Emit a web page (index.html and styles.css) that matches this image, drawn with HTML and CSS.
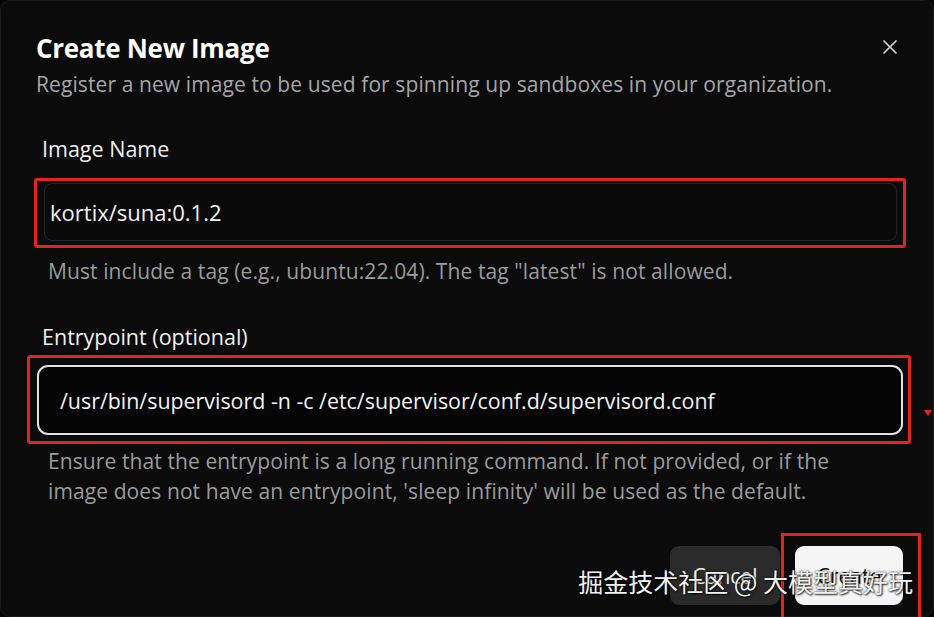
FILE: index.html
```html
<!DOCTYPE html>
<html lang="en">
<head>
<meta charset="utf-8">
<title>Create New Image</title>
<link rel="stylesheet" href="styles.css">
</head>
<body>
<div class="dialog">
  <button class="close" aria-label="Close">
    <svg width="16" height="16" viewBox="0 0 16 16"><path d="M2 2L14 14M14 2L2 14" stroke="#d4d4d4" stroke-width="1.7" stroke-linecap="round"/></svg>
  </button>
  <h1 class="title">Create New Image</h1>
  <p class="subtitle">Register a new image to be used for spinning up sandboxes in your organization.</p>

  <label class="label label-first">Image Name</label>
  <div class="mark mark-one">
    <div class="input input-plain">kortix/suna:0.1.2</div>
  </div>
  <p class="help help-one">Must include a tag (e.g., ubuntu:22.04). The tag "latest" is not allowed.</p>

  <label class="label label-second">Entrypoint (optional)</label>
  <div class="mark mark-two">
    <div class="input input-focus">/usr/bin/supervisord -n -c /etc/supervisor/conf.d/supervisord.conf</div>
    <span class="tick"></span>
  </div>
  <p class="help help-two">Ensure that the entrypoint is a long running command. If not provided, or if the image does not have an entrypoint, 'sleep infinity' will be used as the default.</p>

  <div class="actions">
    <button class="btn btn-cancel">Cancel</button>
    <span class="create-wrap"><button class="btn btn-create">Create</button></span>
  </div>

  <div class="watermark">掘金技术社区 @ 大模型真好玩</div>
</div>
</body>
</html>
```
FILE: styles.css
```css
* { box-sizing: border-box; }
html, body { margin: 0; padding: 0; background: #050505; }
body {
  width: 934px;
  height: 617px;
  overflow: hidden;
  font-family: "Open Sans", "Noto Sans", sans-serif;
}
.dialog {
  position: relative;
  width: 934px;
  height: 617px;
  background: #0b0b0b;
  border: 1px solid #1a1a1a;
  border-radius: 10px;
  padding: 31px 30px 0 35px;
  display: flex;
  flex-direction: column;
  align-items: flex-start;
}
.close {
  position: absolute;
  top: 38px;
  right: 35px;
  background: none;
  border: 0;
  padding: 0;
  width: 16px;
  height: 16px;
  display: flex;
  align-items: center;
  justify-content: center;
}
.title {
  margin: 0;
  font-size: 26px;
  line-height: 32px;
  font-weight: 700;
  color: #ffffff;
  letter-spacing: -0.3px;
}
.subtitle {
  margin: 6px 0 0;
  font-size: 21px;
  line-height: 28px;
  color: #a6a6a6;
  letter-spacing: 0.1px;
}
.label {
  display: block;
  margin-left: 6px;
  font-size: 21.5px;
  line-height: 28px;
  color: #f0f0f0;
}
.label-first { margin-top: 37px; }
.label-second { margin-top: 38px; }
.mark {
  position: relative;
  border: 3px solid #e0261c;
  border-radius: 3px;
}
.mark-one {
  margin-top: 15px;
  margin-left: -2px;
  width: 872px;
  padding: 2px 6px 4px 7px;
}
.mark-two {
  margin-top: 4px;
  margin-left: -9px;
  width: 884px;
  padding: 7px 5px 6px 7px;
}
.input {
  width: 100%;
  display: flex;
  align-items: center;
  font-size: 22px;
  color: #f2f2f2;
  background: #0a0a0a;
}
.input-plain {
  height: 58px;
  border: 1px solid #262626;
  border-radius: 8px;
  padding-left: 5px;
}
.input-focus {
  height: 70px;
  font-size: 21.4px;
  border: 2px solid #e2e2e2;
  border-radius: 11px;
  padding-left: 21px;
  background: #050505;
}
.tick {
  position: absolute;
  right: -24px;
  top: 52px;
  width: 0;
  height: 0;
  border-left: 4px solid transparent;
  border-right: 4px solid transparent;
  border-top: 6px solid #e0261c;
}
.help {
  margin: 0;
  margin-left: 12px;
  font-size: 21px;
  color: #9b9b9b;
  letter-spacing: 0.1px;
}
.help-one { margin-top: 9px; line-height: 28px; }
.help-two { margin-top: 2px; line-height: 30px; width: 792px; }
.actions {
  align-self: flex-end;
  margin-top: 40px;
  display: flex;
  gap: 15px;
}
.btn {
  height: 59px;
  border: 0;
  border-radius: 9px;
  font-family: inherit;
  font-size: 21px;
  padding: 0;
}
.btn-cancel {
  width: 110px;
  background: #2a2a2a;
  color: #ececec;
}
.create-wrap {
  position: relative;
  display: block;
}
.create-wrap::after {
  content: "";
  position: absolute;
  left: -14px;
  top: -13px;
  right: -18px;
  bottom: -30px;
  border: 3px solid #e0261c;
}
.btn-create {
  width: 108px;
  background: #f5f5f5;
  color: #111111;
}
.watermark {
  position: absolute;
  right: 20px;
  top: 562px;
  font-family: "Noto Sans CJK SC", sans-serif;
  font-size: 25px;
  line-height: 36px;
  color: #f2f2f2;
  text-shadow: 0 0 2px rgba(0,0,0,0.9), 1px 1px 2px rgba(0,0,0,0.8);
  white-space: nowrap;
}
```
